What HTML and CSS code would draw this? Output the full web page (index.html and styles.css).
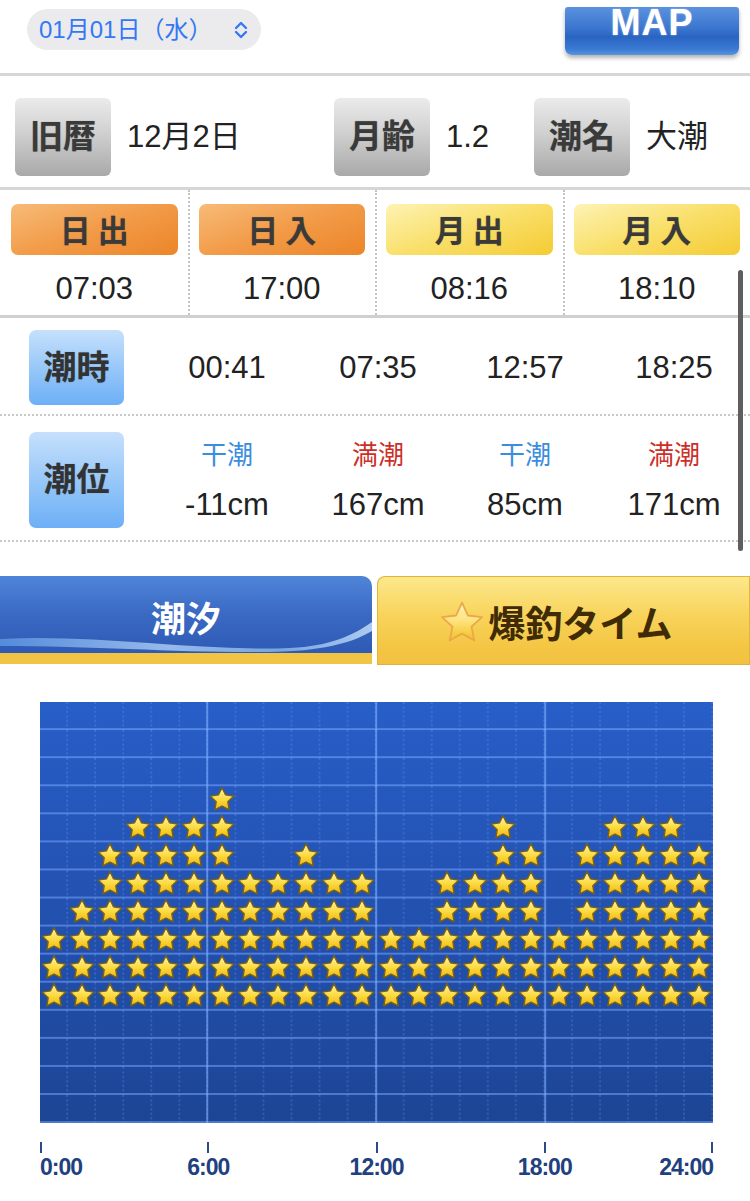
FILE: index.html
```html
<!DOCTYPE html>

<html>
    <head>
        <title>潮汐・爆釣タイム</title>
        <meta charset="UTF-8">
        <meta name="viewport" content="width=device-width, initial-scale=1.0">
        <link rel="stylesheet" href="styles.css">
    </head>
    <body>
        <!-- shared shapes for the chart stars -->
        <svg class="defs" width="0" height="0">
            <defs>
                <linearGradient id="star-fill" x1="0" y1="0" x2="0" y2="1">
                    <stop offset="0" stop-color="#fff6b0"/>
                    <stop offset="0.55" stop-color="#fcd93c"/>
                    <stop offset="1" stop-color="#ebb516"/>
                </linearGradient>
                <symbol id="star" viewBox="0 0 24 24">
                    <path d="M12 2.3 L15.1 8.5 L21.99 9.56 L17 14.4 L18.17 21.29 L12 18.1 L5.83 21.29 L7 14.4 L2.01 9.56 L8.9 8.5 Z"
                          fill="url(#star-fill)" stroke="#7a6212" stroke-width="1.2" stroke-linejoin="round"/>
                </symbol>
            </defs>
        </svg>

        <div class="top-bar">
            <div class="date-select">
                <span>01月01日（水）</span>
                <svg class="chevrons" width="16" height="22" viewBox="0 0 16 22">
                    <path d="M3 9 L8 4 L13 9 M3 13 L8 18 L13 13" fill="none" stroke="#3478f6"
                          stroke-width="2.4" stroke-linecap="round" stroke-linejoin="round"/>
                </svg>
            </div>
            <div class="map-button">MAP</div>
        </div>

        <div class="info-row">
            <div class="info-item"><span class="gray-label">旧暦</span><span class="info-value">12月2日</span></div>
            <div class="info-item"><span class="gray-label">月齢</span><span class="info-value">1.2</span></div>
            <div class="info-item"><span class="gray-label">潮名</span><span class="info-value">大潮</span></div>
        </div>

        <div class="sun-row">
            <div class="sun-cell">
                <div class="sun-label orange">日出</div>
                <div class="sun-time">07:03</div>
            </div>
            <div class="sun-cell">
                <div class="sun-label orange">日入</div>
                <div class="sun-time">17:00</div>
            </div>
            <div class="sun-cell">
                <div class="sun-label yellow">月出</div>
                <div class="sun-time">08:16</div>
            </div>
            <div class="sun-cell">
                <div class="sun-label yellow">月入</div>
                <div class="sun-time">18:10</div>
            </div>
        </div>

        <div class="tide-row tide-times">
            <div><span class="blue-label">潮時</span></div>
            <div class="tide-time">00:41</div>
            <div class="tide-time">07:35</div>
            <div class="tide-time">12:57</div>
            <div class="tide-time">18:25</div>
        </div>

        <div class="tide-row tide-levels">
            <div><span class="blue-label tall">潮位</span></div>
            <div class="tide-level"><span class="kind low">干潮</span><span class="level">-11cm</span></div>
            <div class="tide-level"><span class="kind high">満潮</span><span class="level">167cm</span></div>
            <div class="tide-level"><span class="kind low">干潮</span><span class="level">85cm</span></div>
            <div class="tide-level"><span class="kind high">満潮</span><span class="level">171cm</span></div>
        </div>

        <div class="tabs">
            <div class="tab tab-tide">
                <svg class="wave" width="372" height="77" viewBox="0 0 372 77">
                    <defs>
                        <linearGradient id="wave-fill" x1="0" y1="0" x2="1" y2="0">
                            <stop offset="0" stop-color="#5f9be6"/>
                            <stop offset="0.45" stop-color="#b9d9fb"/>
                            <stop offset="0.75" stop-color="#8dbdf0"/>
                            <stop offset="1" stop-color="#d6ebff"/>
                        </linearGradient>
                    </defs>
                    <path d="M0 63 C100 58 200 76 290 72 C330 70 352 60 372 46 L372 55 C350 68 320 75 270 76 C180 77 100 70 0 70 Z"
                          fill="url(#wave-fill)" opacity="0.75"/>
                </svg>
                <span>潮汐</span>
            </div>
            <div class="tab tab-bakucho">
                <svg width="48" height="52" viewBox="0 0 24 24">
                    <defs>
                        <linearGradient id="tab-star" x1="0" y1="0" x2="0" y2="1">
                            <stop offset="0" stop-color="#fff2c0"/>
                            <stop offset="0.5" stop-color="#fde27a"/>
                            <stop offset="1" stop-color="#f1c021"/>
                        </linearGradient>
                    </defs>
                    <path d="M12 2.3 L14.94 8.75 L21.99 9.56 L16.76 14.35 L18.17 21.29 L12 17.8 L5.83 21.29 L7.24 14.35 L2.01 9.56 L9.06 8.75 Z"
                          fill="url(#tab-star)" stroke="#eaa84a" stroke-width="0.9" stroke-linejoin="round"/>
                </svg>
                <span>爆釣タイム</span>
            </div>
        </div>

        <div class="chart-area">
            <div class="chart">
                <svg class="chart-grid" width="673" height="421" viewBox="0 0 673 421">
                    <defs>
                        <pattern id="cell" width="28.042" height="28.067" patternUnits="userSpaceOnUse">
                            <line x1="27.2" y1="0" x2="27.2" y2="28.067" stroke="#7fb0ff" stroke-opacity="0.3"
                                  stroke-width="1.4" stroke-dasharray="2 2.5"/>
                            <rect x="0" y="26.2" width="28.042" height="2" fill="#78a8ff" fill-opacity="0.55"/>
                        </pattern>
                    </defs>
                    <rect width="673" height="421" fill="url(#cell)"/>
                    <rect x="166.2" y="0" width="2" height="421" fill="#80b0ff" fill-opacity="0.6"/>
                    <rect x="335.2" y="0" width="2" height="421" fill="#80b0ff" fill-opacity="0.6"/>
                    <rect x="504.2" y="0" width="2" height="421" fill="#80b0ff" fill-opacity="0.6"/>
                </svg>
                <!-- star columns, filled in by the script below -->
                <div class="stars" id="stars"></div>
            </div>
            <div class="axis">
                <div class="tick first"><span>0:00</span></div>
                <div class="tick"><span>6:00</span></div>
                <div class="tick"><span>12:00</span></div>
                <div class="tick"><span>18:00</span></div>
                <div class="tick last"><span>24:00</span></div>
            </div>
        </div>

        <div class="scroll-indicator"></div>

        <script type="text/javascript">
            /* Number of stars for each hour, 0:00 to 23:00. */
            var starCounts = [3, 4, 6, 7, 7, 7, 8, 5, 5, 6, 5, 5,
                              3, 3, 5, 5, 7, 6, 3, 6, 7, 7, 7, 6];
            var starsElement = document.getElementById("stars");
            var ns = "http://www.w3.org/2000/svg";
            for (var hour = 0; hour < starCounts.length; hour++) {
                var column = document.createElement("div");
                column.className = "star-col";
                for (var i = 0; i < starCounts[hour]; i++) {
                    var cell = document.createElement("div");
                    cell.className = "star";
                    var svg = document.createElementNS(ns, "svg");
                    svg.setAttribute("width", "28");
                    svg.setAttribute("height", "28");
                    var use = document.createElementNS(ns, "use");
                    use.setAttribute("href", "#star");
                    svg.appendChild(use);
                    cell.appendChild(svg);
                    column.appendChild(cell);
                }
                starsElement.appendChild(column);
            }
        </script>
    </body>
</html>
```

FILE: styles.css
```css
* , *:before, *:after {
    box-sizing: border-box;
}
body {
    margin: 0px;
    width: 750px;
    position: relative;
    background: #fff;
    color: #222;
    font-family: "Liberation Sans", "Noto Sans CJK JP", sans-serif;
}
.defs {
    position: absolute;
}

/* top bar */
.top-bar {
    height: 76px;
    display: flex;
    justify-content: space-between;
    align-items: flex-start;
    padding: 7px 11px 0 27px;
    border-bottom: 3px solid #d6d6d6;
}
.date-select {
    margin-top: 2px;
    width: 234px;
    height: 41px;
    border-radius: 21px;
    background: #ebebed;
    display: flex;
    align-items: center;
    justify-content: space-between;
    padding: 0 12px 0 12px;
    color: #3478f6;
    font-size: 24px;
    line-height: 30px;
}
.chevrons {
    display: block;
}
.map-button {
    width: 174px;
    height: 48px;
    border-radius: 3px 3px 7px 7px;
    background: linear-gradient(#5a92de, #3a75cf 45%, #2a64c2 62%, #3b7ad4 88%, #5a93de);
    box-shadow: 0 3px 4px rgba(0, 0, 0, 0.3);
    color: #fff;
    font-weight: bold;
    font-size: 36px;
    line-height: 32px;
    text-align: center;
    letter-spacing: 1px;
    text-shadow: 0 0 2px rgba(255, 255, 255, 0.5);
}

/* old calendar, moon age, tide name */
.info-row {
    height: 114px;
    display: grid;
    grid-template-columns: 319px 200px 1fr;
    padding: 22px 0 0 15px;
    border-bottom: 3px solid #d6d6d6;
}
.info-item {
    display: flex;
    align-items: center;
    gap: 16px;
    height: 78px;
}
.gray-label {
    width: 96px;
    height: 78px;
    border-radius: 6px;
    background: linear-gradient(#ebebeb, #d0d0d0 45%, #a9a9a9);
    display: flex;
    align-items: center;
    justify-content: center;
    padding-bottom: 6px;
    color: #3a3a3a;
    font-weight: bold;
    font-size: 33px;
    text-shadow: 0 0 1px rgba(0, 0, 0, 0.4);
}
.info-value {
    font-size: 31px;
    line-height: 40px;
}

/* sun and moon rise/set */
.sun-row {
    height: 128px;
    display: grid;
    grid-template-columns: repeat(4, 1fr);
    border-bottom: 3px solid #d0d0d0;
}
.sun-cell {
    padding: 14px 10px 0 11px;
}
.sun-cell + .sun-cell {
    border-left: 2px dotted #c4c4c4;
    padding-left: 9px;
}
.sun-label {
    height: 51px;
    border-radius: 7px;
    display: flex;
    align-items: center;
    justify-content: center;
    padding-left: 7px;
    padding-bottom: 3px;
    letter-spacing: 7px;
    color: #3a3a3a;
    font-weight: bold;
    font-size: 31px;
    text-shadow: 0 0 1px rgba(0, 0, 0, 0.35);
}
.orange {
    background: linear-gradient(160deg, #f7bb78, #f29b48 50%, #ec8529);
}
.yellow {
    background: linear-gradient(160deg, #fdf3b4, #f9df6a 50%, #f4cb33);
}
.sun-time {
    margin-top: 14px;
    text-align: center;
    font-size: 31px;
    line-height: 40px;
}

/* tide times and levels */
.tide-row {
    display: grid;
    grid-template-columns: 150px 154px 148px 146px 1fr;
    align-items: center;
    border-bottom: 2px dotted #c8c8c8;
}
.tide-times {
    padding: 12px 0 9px 0;
}
.tide-levels {
    padding: 16px 0 12px 0;
}
.blue-label {
    margin-left: 29px;
    width: 95px;
    height: 75px;
    border-radius: 7px;
    background: linear-gradient(#c6e0fc, #98c8f9 50%, #6daff6);
    display: flex;
    align-items: center;
    justify-content: center;
    padding-bottom: 6px;
    color: #333;
    font-weight: bold;
    font-size: 33px;
    text-shadow: 0 0 1px rgba(0, 0, 0, 0.35);
}
.blue-label.tall {
    height: 96px;
}
.tide-time {
    text-align: center;
    font-size: 31px;
    line-height: 40px;
}
.tide-level {
    display: flex;
    flex-direction: column;
    align-items: center;
    gap: 14px;
}
.kind {
    font-size: 26px;
    line-height: 36px;
}
.low {
    color: #3b8ddd;
}
.high {
    color: #cc2f28;
}
.level {
    font-size: 31px;
    line-height: 36px;
}

/* tabs */
.tabs {
    margin-top: 34px;
    display: flex;
    gap: 5px;
    height: 88px;
}
.tab {
    height: 88px;
    display: flex;
    align-items: center;
    justify-content: center;
    font-weight: bold;
}
.tab-tide {
    position: relative;
    overflow: hidden;
    width: 372px;
    padding-top: 4px;
    border-top-right-radius: 10px;
    border-bottom: 11px solid #f2c444;
    background: linear-gradient(#4f85d9, #3a69c3 50%, #2e5ab5);
    color: #fff;
    font-size: 35px;
}
.tab-tide span {
    position: relative;
}
.wave {
    position: absolute;
    left: 0;
    top: 0;
}
.tab-bakucho {
    flex: 1;
    gap: 2px;
    padding-top: 2px;
    padding-right: 4px;
    border: 1px solid #e2b43a;
    border-bottom: none;
    border-top-left-radius: 8px;
    background: linear-gradient(#fce88c, #f8d35a 45%, #f4c644 80%, #f2c141);
    color: #3f2b05;
    font-size: 37px;
    box-shadow: 0 1px 0 #e0b040;
}
.tab-bakucho svg {
    margin-left: -12px;
}

/* fishing time chart */
.chart-area {
    padding: 38px 37px 0 40px;
}
.chart {
    position: relative;
    width: 673px;
    height: 421px;
    background: linear-gradient(#285ec8, #2352b2 45%, #1d4595);
}
.chart-grid {
    position: absolute;
    left: 0;
    top: 0;
}
.stars {
    position: relative;
    height: 100%;
    display: grid;
    grid-template-columns: repeat(24, 1fr);
}
.star-col {
    display: flex;
    flex-direction: column-reverse;
    align-items: center;
    padding-bottom: 112.3px;
}
.star {
    height: 28.07px;
    display: flex;
    align-items: center;
    justify-content: center;
}
.star svg {
    display: block;
    flex: none;
    margin-top: -3px;
}
.axis {
    margin-top: 19px;
    display: flex;
    justify-content: space-between;
}
.tick {
    width: 0;
    display: flex;
    flex-direction: column;
    align-items: center;
    white-space: nowrap;
    color: #21407e;
    font-weight: bold;
    font-size: 23px;
    line-height: 26px;
    letter-spacing: -1px;
}
.tick:before {
    content: "";
    width: 2px;
    height: 11px;
    margin-bottom: 1px;
    background: #2b4a88;
}
.tick.first {
    align-items: flex-start;
}
.tick.last {
    align-items: flex-end;
}

/* iOS scroll indicator over the right edge */
.scroll-indicator {
    position: absolute;
    left: 738px;
    top: 270px;
    width: 5px;
    height: 281px;
    border-radius: 3px;
    background: #5e5e5e;
}
```
